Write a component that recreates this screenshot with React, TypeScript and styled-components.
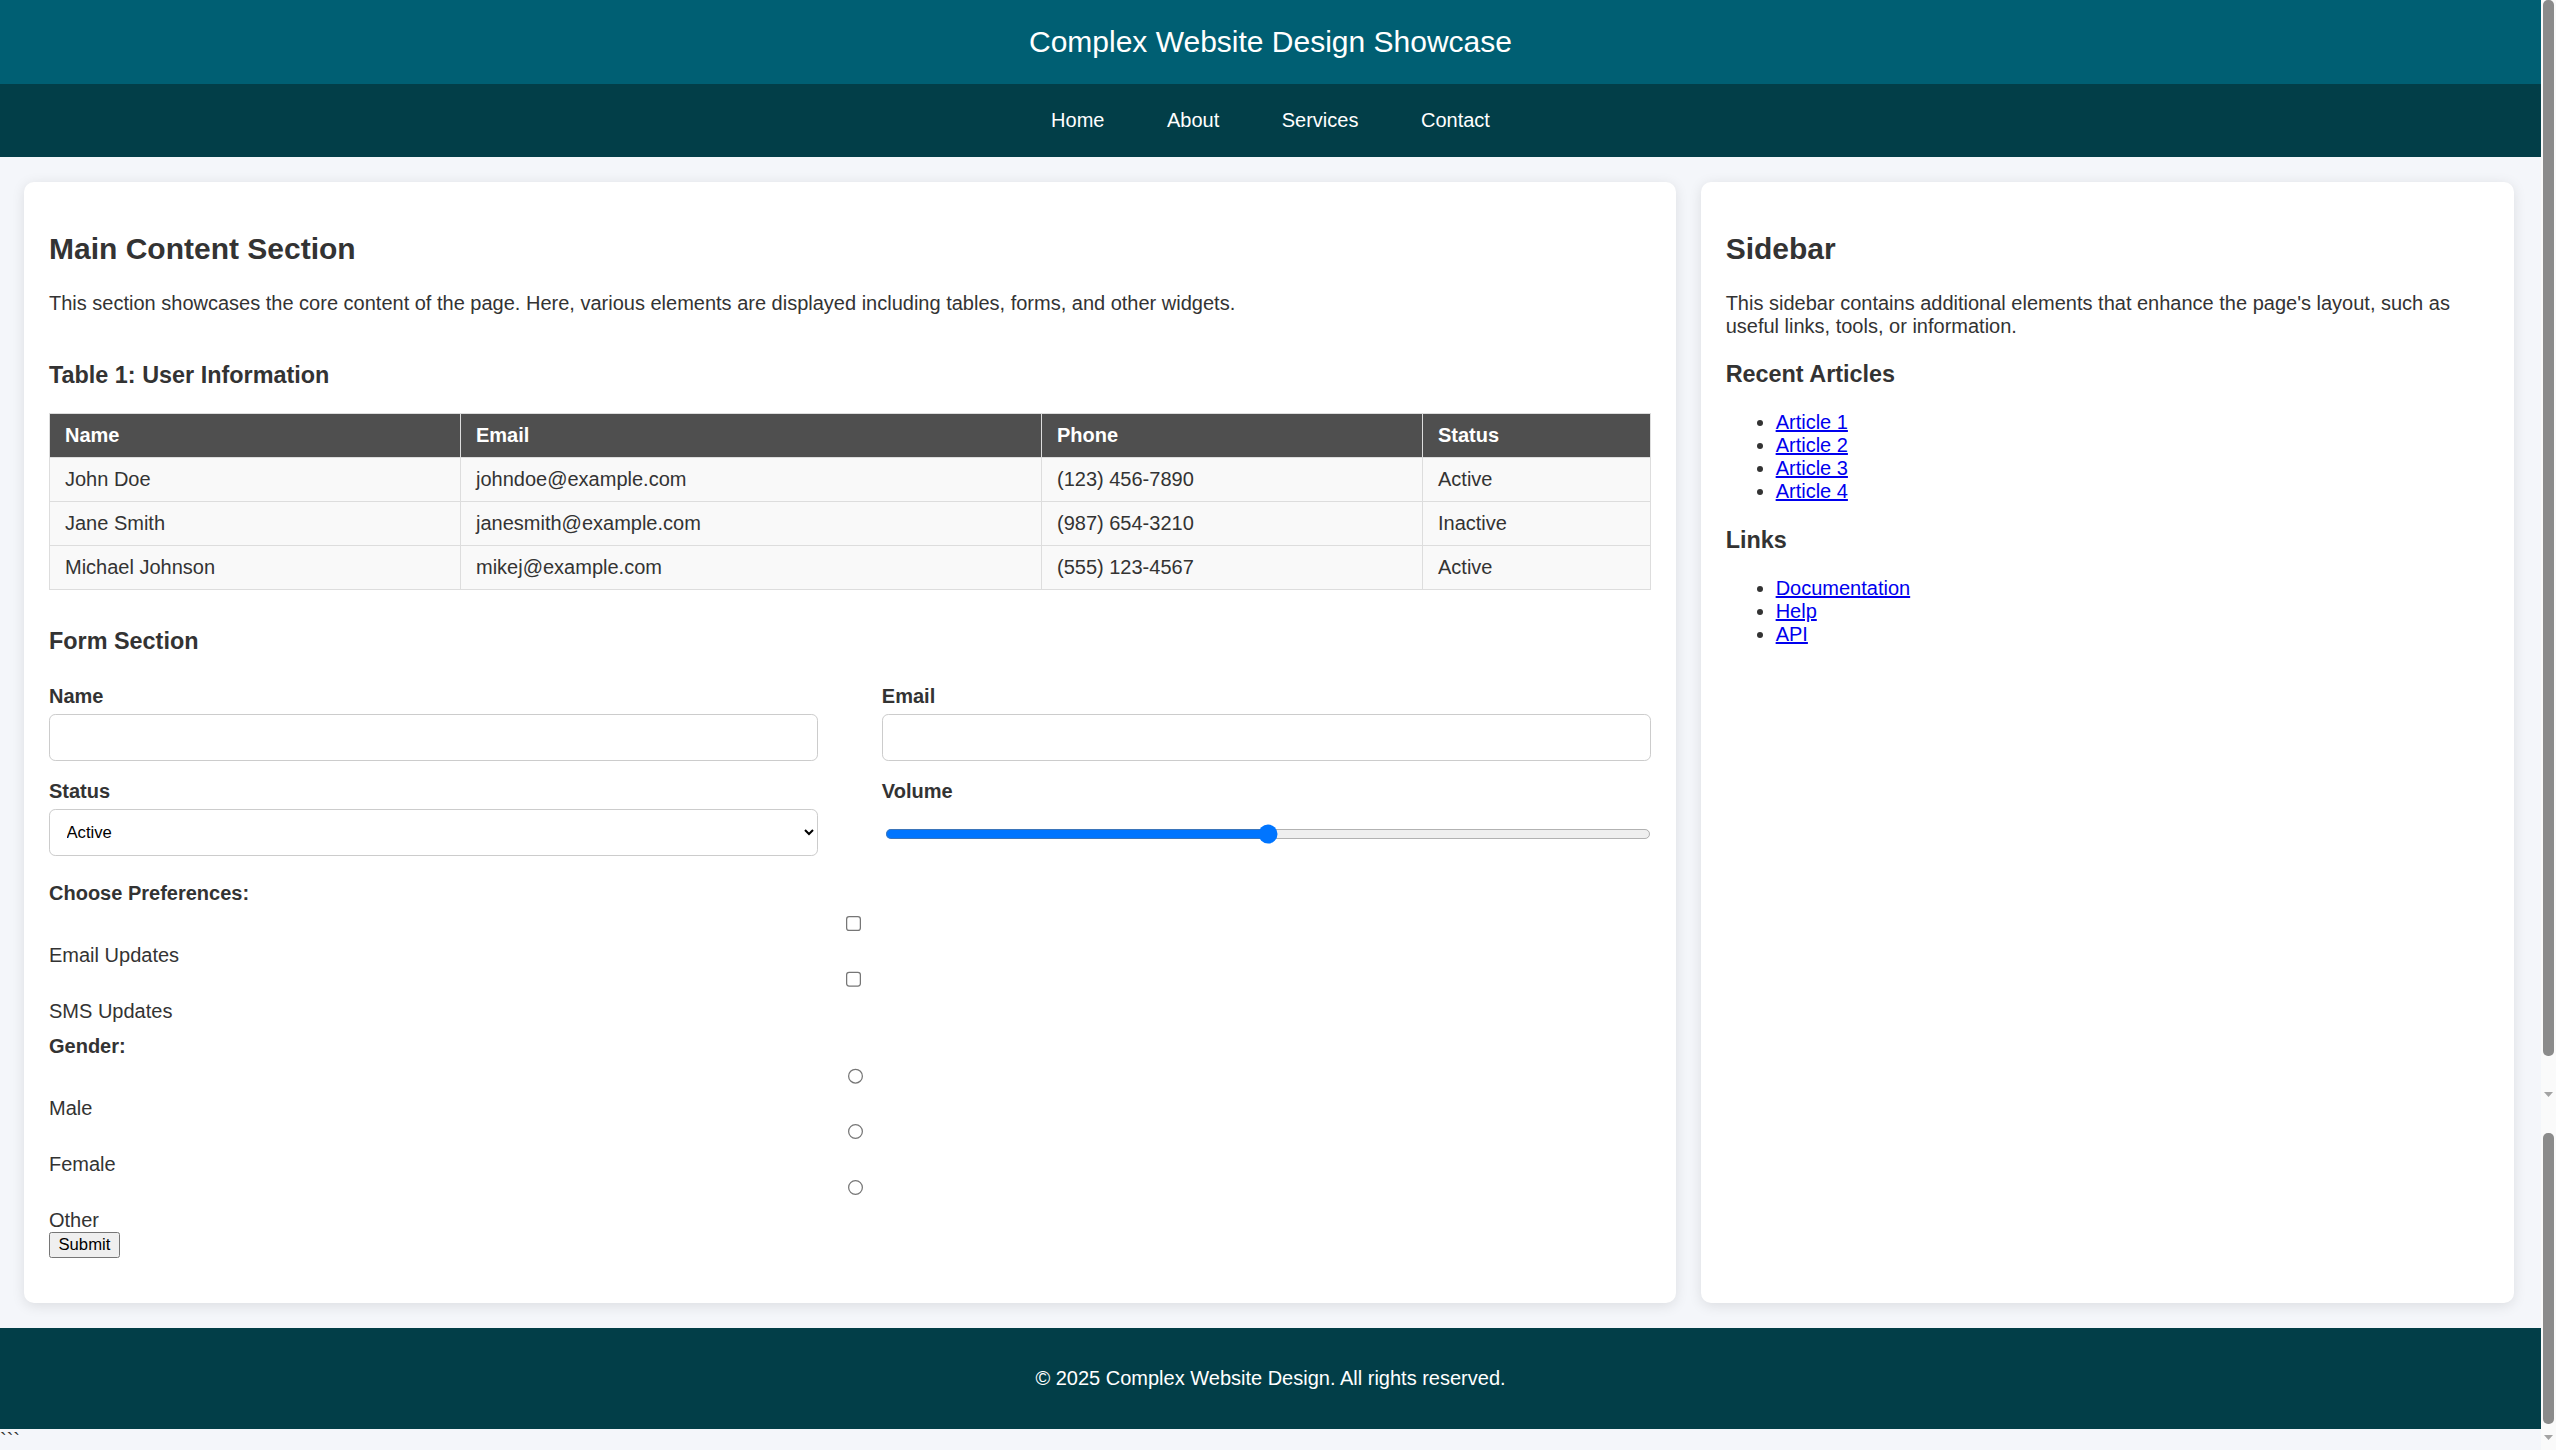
import React from "react";
import styled, { createGlobalStyle } from "styled-components";

const GlobalStyle = createGlobalStyle`
  html { background: #f4f6fa; }
  body {
    margin: 0 15px 0 0;
    background: #f4f6fa;
    color: #333;
    font-family: "Liberation Sans", Arial, Helvetica, sans-serif;
    font-size: 20px;
    line-height: 23px;
  }
  *, *::before, *::after { box-sizing: border-box; }
`;

const Header = styled.header`
  background: #005f73;
  color: #fff;
  padding: 25px;
  text-align: center;
`;

const Title = styled.h1`
  margin: 0;
  font-size: 30px;
  line-height: 34px;
  font-weight: normal;
`;

const Nav = styled.nav`
  background: #023e48;
  display: flex;
  justify-content: center;
  padding: 12.5px 0;
`;

const NavLink = styled.a`
  display: inline-block;
  color: #fff;
  text-decoration: none;
  padding: 12.5px;
  margin: 0 18.75px;
  line-height: 23px;
`;

const Layout = styled.div`
  display: flex;
  align-items: stretch;
  gap: 25px;
  padding: 25px 0;
`;

const Card = styled.section<{ $w: string; $ml?: number }>`
  width: ${(p) => p.$w};
  margin-left: ${(p) => p.$ml ?? 0}px;
  flex: none;
  background: #fff;
  border-radius: 10px;
  padding: 25px;
  box-shadow: 0 2.5px 12.5px rgba(0, 0, 0, 0.1);
`;

const H2 = styled.h2`
  font-size: 30px;
  line-height: 34.5px;
  margin: 25px 0;
  font-weight: bold;
`;

const H3 = styled.h3<{ $mb: number }>`
  font-size: 23.4px;
  line-height: 27px;
  margin: 0 0 ${(p) => p.$mb}px;
  font-weight: bold;
`;

const Paragraph = styled.p<{ $mb: number }>`
  margin: 0 0 ${(p) => p.$mb}px;
`;

const Table = styled.table`
  width: 100%;
  border-collapse: collapse;
  table-layout: fixed;
  margin-bottom: 38px;
`;

const Col = styled.col<{ $w?: number }>`
  width: ${(p) => (p.$w ? `${p.$w}px` : "auto")};
`;

const Th = styled.th`
  background: #4f4f4f;
  color: #fff;
  font-weight: bold;
  text-align: left;
  padding: 10px 15px;
  border: 1px solid #ddd;
  line-height: 23px;
`;

const Td = styled.td`
  background: #f9f9f9;
  padding: 10px 15px;
  border: 1px solid #ddd;
  line-height: 23px;
`;

const Form = styled.form`
  display: block;
`;

const FormRow = styled.div`
  display: flex;
  flex-wrap: wrap;
  justify-content: space-between;
`;

const FormGroup = styled.div<{ $full?: boolean; $mb: number }>`
  width: ${(p) => (p.$full ? "100%" : "48%")};
  margin-bottom: ${(p) => p.$mb}px;
`;

const Label = styled.label`
  display: block;
  font-weight: bold;
  line-height: 23px;
  margin-bottom: 6.25px;
`;

const OptionLabel = styled.label`
  display: block;
  line-height: 23px;
`;

const TextInput = styled.input`
  display: block;
  width: 100%;
  height: 46.7px;
  padding: 12.5px;
  border: 1px solid #ccc;
  border-radius: 6.25px;
  font-family: "Liberation Sans", Arial, sans-serif;
  font-size: 16.67px;
  background: #fff;
`;

const Select = styled.select`
  display: block;
  width: 100%;
  height: 47.7px;
  padding: 12.5px;
  border: 1px solid #ccc;
  border-radius: 6.25px;
  font-family: "Liberation Sans", Arial, sans-serif;
  font-size: 16.67px;
  color: #000;
  background: #fff;
`;

const RangeWrap = styled.div`
  height: 54.7px;
  display: flex;
  align-items: center;
  padding: 0 0 4.7px 3px;
`;

const Range = styled.input`
  zoom: 1.25;
  width: 100%;
  margin: 0;
`;

const ControlRow = styled.div<{ $shift: number }>`
  height: 32.75px;
  display: flex;
  justify-content: center;
  align-items: flex-start;
  padding-top: 4px;
  padding-left: ${(p) => p.$shift}px;
`;

const Control = styled.input`
  zoom: 1.25;
  margin: 0;
`;

const ButtonRow = styled.div`
  display: flex;
  padding-bottom: 20px;
`;

const SubmitButton = styled.button`
  zoom: 1.25;
  margin: 0;
  font-family: "Liberation Sans", Arial, sans-serif;
  font-size: 13.333px;
`;

const List = styled.ul<{ $mb: number }>`
  margin: 0 0 ${(p) => p.$mb}px;
  padding-left: 50px;
  line-height: 23px;
`;

const ListLink = styled.a`
  color: #0000ee;
  text-decoration: underline;
`;

const Footer = styled.footer`
  background: #023e48;
  color: #fff;
  text-align: center;
  padding: 18.75px;
`;

const FooterText = styled.p`
  margin: 20px 0;
`;

const Trailing = styled.div`
  line-height: 23px;
`;

/* Browser scrollbar as it appears in the screenshot (overlays the right edge) */
const ScrollTrack = styled.div`
  position: fixed;
  top: 0;
  right: 0;
  width: 15px;
  height: 100vh;
  background: #fafafa;
  display: flex;
  flex-direction: column;
  align-items: center;
`;

const Thumb = styled.div<{ $h: number }>`
  width: 11px;
  height: ${(p) => p.$h}px;
  flex: none;
  background: #8b8b8b;
  border-radius: 5px;
`;

const ArrowGap = styled.div<{ $h: number }>`
  height: ${(p) => p.$h}px;
  flex: none;
  display: flex;
  align-items: center;
  justify-content: center;
`;

const users = [
  { name: "John Doe", email: "johndoe@example.com", phone: "(123) 456-7890", status: "Active" },
  { name: "Jane Smith", email: "janesmith@example.com", phone: "(987) 654-3210", status: "Inactive" },
  { name: "Michael Johnson", email: "mikej@example.com", phone: "(555) 123-4567", status: "Active" },
];

function DownArrow() {
  return (
    <svg width="9" height="5" viewBox="0 0 9 5">
      <path d="M0 0 H9 L4.5 5 Z" fill="#a3a3a3" />
    </svg>
  );
}

export default function App() {
  return (
    <>
      <GlobalStyle />
      <Header>
        <Title>Complex Website Design Showcase</Title>
      </Header>
      <Nav>
        <NavLink href="#">Home</NavLink>
        <NavLink href="#">About</NavLink>
        <NavLink href="#">Services</NavLink>
        <NavLink href="#">Contact</NavLink>
      </Nav>
      <Layout>
        <Card $w="65%" $ml={24}>
          <H2>Main Content Section</H2>
          <Paragraph $mb={47.5}>
            This section showcases the core content of the page. Here, various elements are displayed including tables, forms, and other widgets.
          </Paragraph>
          <H3 $mb={24}>Table 1: User Information</H3>
          <Table>
            <colgroup>
              <Col $w={411} />
              <Col $w={581} />
              <Col $w={381} />
              <Col />
            </colgroup>
            <thead>
              <tr>
                <Th>Name</Th>
                <Th>Email</Th>
                <Th>Phone</Th>
                <Th>Status</Th>
              </tr>
            </thead>
            <tbody>
              {users.map((u) => (
                <tr key={u.email}>
                  <Td>{u.name}</Td>
                  <Td>{u.email}</Td>
                  <Td>{u.phone}</Td>
                  <Td>{u.status}</Td>
                </tr>
              ))}
            </tbody>
          </Table>
          <H3 $mb={29.6}>Form Section</H3>
          <Form onSubmit={(e) => e.preventDefault()}>
            <FormRow>
              <FormGroup $mb={19}>
                <Label htmlFor="name">Name</Label>
                <TextInput id="name" type="text" />
              </FormGroup>
              <FormGroup $mb={19}>
                <Label htmlFor="email">Email</Label>
                <TextInput id="email" type="email" />
              </FormGroup>
              <FormGroup $mb={19}>
                <Label htmlFor="status">Status</Label>
                <Select id="status" defaultValue="active">
                  <option value="active">Active</option>
                  <option value="inactive">Inactive</option>
                </Select>
              </FormGroup>
              <FormGroup $mb={19}>
                <Label htmlFor="volume">Volume</Label>
                <RangeWrap>
                  <Range id="volume" type="range" min={0} max={100} defaultValue={50} />
                </RangeWrap>
              </FormGroup>
              <FormGroup $full $mb={11.9}>
                <Label>Choose Preferences:</Label>
                <ControlRow $shift={9}>
                  <Control type="checkbox" id="pref-email" />
                </ControlRow>
                <OptionLabel htmlFor="pref-email">Email Updates</OptionLabel>
                <ControlRow $shift={9}>
                  <Control type="checkbox" id="pref-sms" />
                </ControlRow>
                <OptionLabel htmlFor="pref-sms">SMS Updates</OptionLabel>
              </FormGroup>
              <FormGroup $full $mb={0}>
                <Label>Gender:</Label>
                <ControlRow $shift={12}>
                  <Control type="radio" name="gender" id="g-male" />
                </ControlRow>
                <OptionLabel htmlFor="g-male">Male</OptionLabel>
                <ControlRow $shift={12}>
                  <Control type="radio" name="gender" id="g-female" />
                </ControlRow>
                <OptionLabel htmlFor="g-female">Female</OptionLabel>
                <ControlRow $shift={12}>
                  <Control type="radio" name="gender" id="g-other" />
                </ControlRow>
                <OptionLabel htmlFor="g-other">Other</OptionLabel>
              </FormGroup>
            </FormRow>
            <ButtonRow>
              <SubmitButton type="submit">Submit</SubmitButton>
            </ButtonRow>
          </Form>
        </Card>
        <Card $w="32%">
          <H2>Sidebar</H2>
          <Paragraph $mb={23.4}>
            This sidebar contains additional elements that enhance the page's layout, such as useful links, tools, or information.
          </Paragraph>
          <H3 $mb={23.4}>Recent Articles</H3>
          <List $mb={23.4}>
            <li><ListLink href="#">Article 1</ListLink></li>
            <li><ListLink href="#">Article 2</ListLink></li>
            <li><ListLink href="#">Article 3</ListLink></li>
            <li><ListLink href="#">Article 4</ListLink></li>
          </List>
          <H3 $mb={23.4}>Links</H3>
          <List $mb={0}>
            <li><ListLink href="#">Documentation</ListLink></li>
            <li><ListLink href="#">Help</ListLink></li>
            <li><ListLink href="#">API</ListLink></li>
          </List>
        </Card>
      </Layout>
      <Footer>
        <FooterText>© 2025 Complex Website Design. All rights reserved.</FooterText>
      </Footer>
      <Trailing>```</Trailing>
      <ScrollTrack aria-hidden="true">
        <Thumb $h={1056} />
        <ArrowGap $h={77}>
          <DownArrow />
        </ArrowGap>
        <Thumb $h={291} />
        <ArrowGap $h={26}>
          <DownArrow />
        </ArrowGap>
      </ScrollTrack>
    </>
  );
}
